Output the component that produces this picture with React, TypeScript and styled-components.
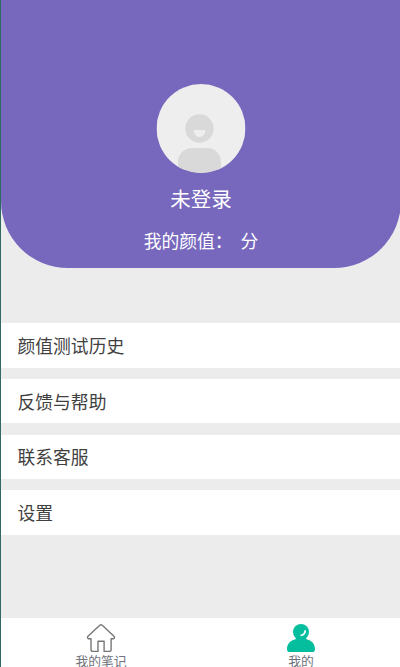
import React from 'react';
import styled, { createGlobalStyle } from 'styled-components';

const GlobalStyle = createGlobalStyle`
  * { box-sizing: border-box; }
  body {
    margin: 0;
    font-family: "Noto Sans CJK SC", "Noto Sans", sans-serif;
  }
`;

const Screen = styled.div`
  display: flex;
  flex-direction: column;
  height: 667px;
  width: 401px;
  overflow: hidden;
  background: #ececec;
  border-left: 1px solid #2f6b60;
`;

const Hero = styled.header`
  display: flex;
  flex-direction: column;
  align-items: center;
  flex: none;
  height: 267.8px;
  padding-top: 84px;
  border-radius: 0 0 67px 67px;
  background: #7768be;
  color: #fff;
`;

const Avatar = styled.svg`
  display: block;
  width: 90px;
  height: 89px;
`;

const UserName = styled.div`
  margin-top: 10px;
  font-size: 20.5px;
  line-height: 30px;
`;

const Score = styled.div`
  display: flex;
  gap: 8px;
  margin-top: 14px;
  font-size: 17.8px;
  line-height: 26px;
`;

const Menu = styled.main`
  display: flex;
  flex: 1;
  flex-direction: column;
  gap: 11.1px;
  padding-top: 55.6px;
`;

const MenuItem = styled.div`
  display: flex;
  align-items: center;
  flex: none;
  height: 44.5px;
  padding: 0 0 1.4px 16.5px;
  background: #fff;
  color: #404040;
  font-size: 17.8px;
`;

const TabBar = styled.nav`
  display: flex;
  flex: none;
  height: 49px;
  background: #fff;
`;

const Tab = styled.div`
  display: flex;
  flex: 1;
  flex-direction: column;
  align-items: center;
  padding-top: 5px;
  color: #70737c;
  font-size: 12.8px;
  line-height: 14px;
`;

const TabIcon = styled.svg`
  display: block;
  flex: none;
  width: 30px;
  height: 30px;
  margin-bottom: 1px;
`;

const menu = ['颜值测试历史', '反馈与帮助', '联系客服', '设置'];

export default function App() {
  return (
    <>
      <GlobalStyle />
      <Screen>
        <Hero>
          <Avatar viewBox="-0.5 0 90 89">
            <defs>
              <clipPath id="avatar-circle"><circle cx="44.5" cy="44.5" r="44.5" /></clipPath>
            </defs>
            <g clipPath="url(#avatar-circle)">
              <rect width="89" height="89" fill="#eee" />
              <circle cx="43" cy="44.5" r="14.2" fill="#d9d9d9" />
              <path d="M37.2 46H49a5.9 7 0 0 1-11.8 0Z" fill="#eee" />
              <rect x="21.5" y="64" width="43" height="40" rx="14" fill="#d9d9d9" />
            </g>
          </Avatar>
          <UserName>未登录</UserName>
          <Score><span>我的颜值：</span><span>分</span></Score>
        </Hero>
        <Menu>
          {menu.map((label) => <MenuItem key={label}>{label}</MenuItem>)}
        </Menu>
        <TabBar>
          <Tab>
            <TabIcon viewBox="0 0 30 30" fill="none" stroke="#777" strokeWidth="1.4" strokeLinejoin="round">
              <path d="M13.8 2.2Q15 1.2 16.2 2.2L28 13.2Q29.3 14.8 27.4 15.8H25.1V26.5Q25.1 28.4 23.2 28.4H18.1V18.2H12V28.4H7Q5 28.4 5 26.5V15.8H2.6Q.7 14.8 2 13.2Z" />
            </TabIcon>
            我的笔记
          </Tab>
          <Tab>
            <TabIcon viewBox="0 0 30 30">
              <circle cx="15" cy="9" r="8" fill="#04be9e" />
              <path d="M10 15H20C20 16 21 16.5 22 16.8C26.5 18.2 29 21.5 29 26.2Q29 29 26.2 29H3.8Q1 29 1 26.2C1 21.5 3.5 18.2 8 16.8C9 16.5 10 16 10 15Z" fill="#04be9e" />
              <path d="M18.3 7.4Q19.8 6.2 20 8C19.8 11.2 17.8 13.1 14.9 13.1Q13.8 12.5 14.6 11.8Q18 11 18.3 7.4Z" fill="#fff" />
            </TabIcon>
            我的
          </Tab>
        </TabBar>
      </Screen>
    </>
  );
}
